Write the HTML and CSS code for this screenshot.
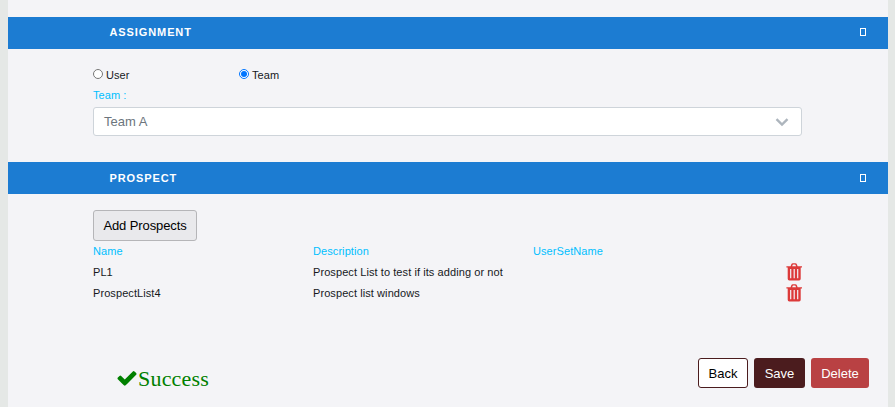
FILE: index.html
```html
<!DOCTYPE html>
<html lang="en">
<head>
<meta charset="utf-8">
<title>Assignment</title>
<link rel="stylesheet" href="styles.css">
</head>
<body>
<svg class="defs" width="0" height="0" aria-hidden="true">
  <symbol id="trash" viewBox="0 0 16 18">
    <path fill-rule="evenodd" d="M4.600 3.200 5.200 1.500Q5.600.3 6.900.3h2.400q1.300 0 1.700 1.200l.6 1.700H16v1.300h-1.300v11.300q0 1.700-1.600 1.700H3.300q-1.600 0-1.600-1.700V4.500H.4V3.200zM6.200 3.200h3.800l-.3-1Q9.500 1.600 9 1.600H7.200q-.5 0-.7.6zM4.100 6v9.200h1.200V6zm3.500 0v9.200h1.200V6zm3.500 0v9.200h1.200V6z"/>
  </symbol>
</svg>
<main class="panel">
  <header class="bar"><h2>ASSIGNMENT</h2><span class="toggle"></span></header>
  <section class="assignment">
    <div class="radios">
      <label><input type="radio" name="kind"><span>User</span></label>
      <label><input type="radio" name="kind" checked><span>Team</span></label>
    </div>
    <div class="label">Team :</div>
    <div class="select"><span>Team A</span>
      <svg width="14" height="10" viewBox="0 0 14 10"><path d="M1.500 2.200 7 7.500l5.500-5.300" fill="none" stroke="#adb5bd" stroke-width="2.400"/></svg>
    </div>
  </section>
  <header class="bar low"><h2>PROSPECT</h2><span class="toggle"></span></header>
  <section class="prospect">
    <button class="btn add">Add Prospects</button>
    <div class="row head"><span>Name</span><span>Description</span><span>UserSetName</span></div>
    <div class="row"><span>PL1</span><span>Prospect List to test if its adding or not</span><span></span><svg class="trash"><use href="#trash"/></svg></div>
    <div class="row"><span>ProspectList4</span><span>Prospect list windows</span><span></span><svg class="trash"><use href="#trash"/></svg></div>
  </section>
  <footer class="footer">
    <div class="success">
      <svg width="22" height="22" viewBox="0 0 1792 1792"><path fill="#008000" d="M1671 566q0 40-28 68l-724 724-136 136q-28 28-68 28t-68-28l-136-136-362-362q-28-28-28-68t28-68l136-136q28-28 68-28t68 28l294 295 656-657q28-28 68-28t68 28l136 136q28 28 28 68z"/></svg>
      <span>Success</span>
    </div>
    <div class="actions">
      <button class="btn back">Back</button><button class="btn save">Save</button><button class="btn delete">Delete</button>
    </div>
  </footer>
</main>
</body>
</html>
```
FILE: styles.css
```css
* { box-sizing: border-box; }
body {
  margin: 0;
  height: 407px;
  overflow: hidden;
  background: #e5e8e6;
  font: 11px/21px "Liberation Sans", Arial, sans-serif;
  letter-spacing: 0.08px;
  color: #16191c;
}
.defs { display: block; }
.panel {
  width: 880px;
  height: 407px;
  margin-left: 8px;
  padding-top: 17px;
  background: #f4f4f7;
}
.bar {
  display: flex;
  align-items: center;
  justify-content: space-between;
  height: 32px;
  padding: 0 22px 2px 101.500px;
  background: #1c7cd2;
  color: #fff;
}
.bar.low { padding-bottom: 0; }
.bar h2 {
  margin: 0;
  font-size: 11px;
  letter-spacing: 0.9px;
}
.toggle {
  width: 6px;
  height: 8px;
  border: 1px solid #fff;
}
.assignment {
  height: 113px;
  padding: 15px 86px 0 85px;
}
.radios { display: flex; height: 21px; }
.radios label {
  display: flex;
  align-items: center;
  width: 146px;
}
.radios span { padding-top: 2px; }
.radios input {
  width: 10px;
  height: 10px;
  margin: 0 3px 2px 0;
}
.label, .head { color: #00bfff; }
.select {
  display: flex;
  align-items: center;
  justify-content: space-between;
  height: 29px;
  margin-top: 1px;
  padding: 0 12px 0 10px;
  border: 1px solid #ced4da;
  border-radius: 3px;
  background: #fff;
  color: #6c757d;
  font-size: 13px;
  letter-spacing: 0;
}
.prospect {
  height: 163px;
  padding: 16px 86px 0 85px;
}
.btn {
  height: 30px;
  padding: 0;
  border: 1px solid transparent;
  border-radius: 3px;
  font: 13px "Liberation Sans", Arial, sans-serif;
}
.add {
  display: block;
  width: 104px;
  height: 31px;
  border-color: #b5b5b8;
  background: #e9e9ec;
  color: #000;
  letter-spacing: -0.1px;
}
.row {
  display: grid;
  grid-template-columns: 220px 220px 253px 16px;
  height: 21px;
}
.trash {
  width: 16px;
  height: 18px;
  margin-top: 1px;
  fill: #dc3a3a;
}
.footer {
  display: flex;
  justify-content: space-between;
  padding: 1px 19px 0 107.500px;
}
.success {
  display: flex;
  align-items: center;
  height: 42px;
  color: #008000;
  font: 22px "Liberation Serif", serif;
  letter-spacing: 0.2px;
}
.success svg { margin: -2px 0.500px 0 0; }
.actions { display: flex; gap: 6px; }
.back { width: 50px; border-color: #4b1c1e; background: #fff; color: #000; }
.save { width: 51px; background: #4b1c1e; color: #fff; }
.delete { width: 58px; background: #b94143; color: #fff; }
```
